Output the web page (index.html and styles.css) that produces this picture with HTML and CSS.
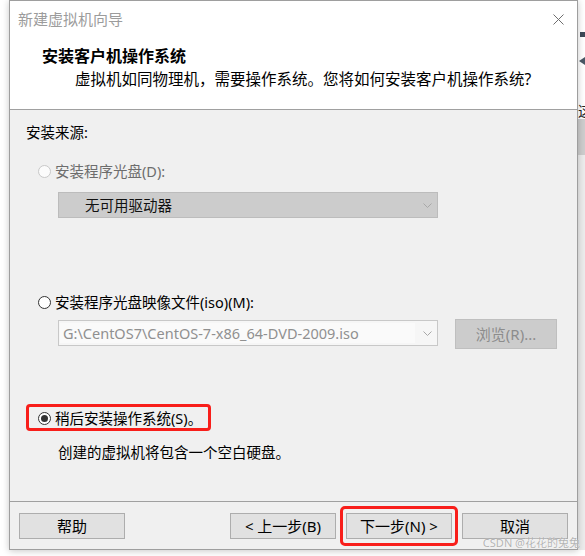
FILE: index.html
```html
<!DOCTYPE html>
<html lang="zh-CN">
<head>
<meta charset="utf-8">
<title>新建虚拟机向导</title>
<link rel="stylesheet" href="styles.css">
</head>
<body>
<div class="screen">
  <div class="window">
    <div class="top">
      <div class="titlebar">
        <span class="title">新建虚拟机向导</span>
        <svg class="close" width="11" height="11" viewBox="0 0 11 11"><path d="M0.5 0.5 L10.5 10.5 M10.5 0.5 L0.5 10.5" stroke="#6e6e6e" stroke-width="1" fill="none"/></svg>
      </div>
      <div class="heading">安装客户机操作系统</div>
      <div class="subheading">虚拟机如同物理机，需要操作系统。您将如何安装客户机操作系统?</div>
    </div>
    <div class="content">
      <div class="label">安装来源:</div>
      <div class="radio-row disabled"><span class="radio"></span><span>安装程序光盘(D):</span></div>
      <div class="select">
        <span class="select-text">无可用驱动器</span>
        <svg class="chev" width="9" height="5" viewBox="0 0 9 5"><path d="M0.5 0.5 L4.5 4.5 L8.5 0.5" stroke="#a8a8a8" stroke-width="1" fill="none"/></svg>
      </div>
      <div class="radio-row gap-m"><span class="radio"></span><span>安装程序光盘映像文件(iso)(M):</span></div>
      <div class="file-row">
        <div class="combo">
          <span class="combo-text">G:\CentOS7\CentOS-7-x86_64-DVD-2009.iso</span>
          <span class="combo-btn"><svg width="9" height="5" viewBox="0 0 9 5"><path d="M0.5 0.5 L4.5 4.5 L8.5 0.5" stroke="#a8a8a8" stroke-width="1" fill="none"/></svg></span>
        </div>
        <div class="btn btn-disabled">浏览(R)...</div>
      </div>
      <div class="radio-row gap-s marked"><span class="radio checked"></span><span>稍后安装操作系统(S)。</span></div>
      <div class="hint">创建的虚拟机将包含一个空白硬盘。</div>
    </div>
    <div class="footer">
      <div class="btn">帮助</div>
      <div class="spacer"></div>
      <div class="btn">&lt; 上一步(B)</div>
      <div class="btn btn-marked">下一步(N) &gt;</div>
      <div class="btn">取消</div>
    </div>
  </div>
  <div class="strip">
    <div class="strip-bar"></div>
    <div class="strip-tri"></div>
    <div class="strip-char">这</div>
    <div class="strip-dark"></div>
    <div class="strip-gray"></div>
  </div>
</div>
<div class="watermark">CSDN @花花的兔兔</div>
</body>
</html>
```

FILE: styles.css
```css
* { box-sizing: border-box; }
html, body {
  margin: 0;
  padding: 0;
  background: #ffffff;
}
body {
  width: 585px;
  height: 556px;
  overflow: hidden;
  position: relative;
  font-family: "Noto Sans", "Noto Sans CJK SC", sans-serif;
  font-size: 14.5px;
  color: #000;
}
.screen {
  display: flex;
  padding-left: 9px;
  height: 556px;
}
.window {
  flex: none;
  width: 569px;
  height: 550px;
  border: 1px solid #9e9e9e;
  display: flex;
  flex-direction: column;
  box-shadow: 0 1px 7px rgba(0,0,0,0.22);
  position: relative;
  z-index: 1;
}
.top {
  height: 109px;
  background: #ffffff;
  border-bottom: 1px solid #a0a0a0;
}
.titlebar {
  height: 36px;
  display: flex;
  align-items: center;
  justify-content: space-between;
  padding-left: 8px;
  padding-right: 13px;
}
.title {
  font-size: 15px;
  line-height: 20px;
  color: #9c9c9c;
}
.close { display: block; margin-top: 1px; }
.heading {
  margin-top: 9px;
  padding-left: 32px;
  font-size: 16px;
  font-weight: bold;
  line-height: 20px;
}
.subheading {
  margin-top: 3px;
  padding-left: 65px;
  font-size: 15.5px;
  line-height: 20px;
}
.content {
  flex: 1;
  background: #f0f0f0;
  padding-left: 16px;
  padding-top: 12px;
}
.label { line-height: 20px; }
.radio-row {
  display: flex;
  align-items: center;
  margin-left: 12px;
  margin-top: 19px;
  line-height: 20px;
  width: max-content;
  position: relative;
}
.radio-row.gap-m { margin-top: 74px; }
.radio-row.gap-s { margin-top: 59px; }
.radio {
  width: 13px;
  height: 13px;
  border: 1px solid #333333;
  border-radius: 50%;
  background: #ffffff;
  margin-right: 4px;
  display: flex;
  align-items: center;
  justify-content: center;
  flex: none;
}
.radio.checked::before {
  content: "";
  width: 7px;
  height: 7px;
  border-radius: 50%;
  background: #333333;
}
.disabled { color: #6d6d6d; }
.disabled .radio { border-color: #c8c8c8; background: #fbfbfb; }
.marked::after {
  content: "";
  position: absolute;
  left: -12px;
  right: -9px;
  top: -4px;
  bottom: -3px;
  border: 3px solid #f81e1a;
  border-radius: 4px;
}
.select {
  margin-top: 11px;
  margin-left: 32px;
  width: 380px;
  height: 26px;
  background: #cccccc;
  border: 1px solid #bcbcbc;
  display: flex;
  align-items: center;
  justify-content: space-between;
  padding-left: 26px;
  padding-right: 5px;
}
.select-text { line-height: 20px; color: #111; }
.chev { display: block; }
.file-row {
  margin-top: 7px;
  margin-left: 32px;
  display: flex;
  align-items: flex-start;
  gap: 17px;
}
.combo {
  margin-top: 1px;
  width: 380px;
  height: 26px;
  border: 1px solid #c8c8c8;
  background: #f6f6f6;
  display: flex;
  padding: 2px 0 2px 1px;
}
.combo-text {
  width: 355px;
  background: #fafafa;
  color: #909090;
  line-height: 20px;
  padding-left: 3px;
  white-space: nowrap;
  overflow: hidden;
}
.combo-btn {
  flex: 1;
  display: flex;
  align-items: center;
  justify-content: center;
  padding-left: 3px;
}
.combo-btn svg { display: block; }
.btn {
  flex: none;
  width: 106px;
  height: 26px;
  background: #e1e1e1;
  border: 1px solid #adadad;
  display: flex;
  align-items: center;
  justify-content: center;
  font-size: 15px;
  line-height: 20px;
  position: relative;
}
.btn-disabled {
  width: 102px;
  height: 30px;
  background: #cccccc;
  border-color: #bfbfbf;
  color: #8c8c8c;
}
.hint {
  margin-top: 14px;
  margin-left: 32px;
  line-height: 20px;
}
.footer {
  height: 48px;
  border-top: 1px solid #a0a0a0;
  background: #f0f0f0;
  display: flex;
  align-items: flex-start;
  padding: 11px 9px 0 9px;
  gap: 10px;
}
.spacer { flex: 1; }
.btn-marked::after {
  content: "";
  position: absolute;
  left: -7px;
  right: -7px;
  top: -8px;
  bottom: -8px;
  border: 3px solid #f81e1a;
  border-radius: 5px;
}
.strip {
  flex: none;
  width: 7px;
  height: 550px;
  display: flex;
  flex-direction: column;
  overflow: hidden;
  background: #ffffff;
}
.strip-bar {
  margin-top: 32px;
  margin-left: 2px;
  height: 5px;
  background: #3d4a58;
}
.strip-tri {
  margin-top: 20px;
  margin-left: 1px;
  width: 0;
  height: 0;
  border-top: 4px solid transparent;
  border-bottom: 4px solid transparent;
  border-right: 6px solid #4a5866;
}
.strip-char {
  margin-top: 38px;
  font-size: 14px;
  line-height: 16px;
  color: #222;
  white-space: nowrap;
}
.strip-dark {
  height: 36px;
  background: #cdcdcd;
}
.strip-gray {
  flex: 1;
  background: #ececec;
}
.watermark {
  position: absolute;
  right: 5px;
  top: 536px;
  font-size: 11px;
  line-height: 14px;
  color: rgba(165,165,165,0.85);
  text-shadow: 0 0 1px #fff;
  white-space: nowrap;
  z-index: 2;
}
```
